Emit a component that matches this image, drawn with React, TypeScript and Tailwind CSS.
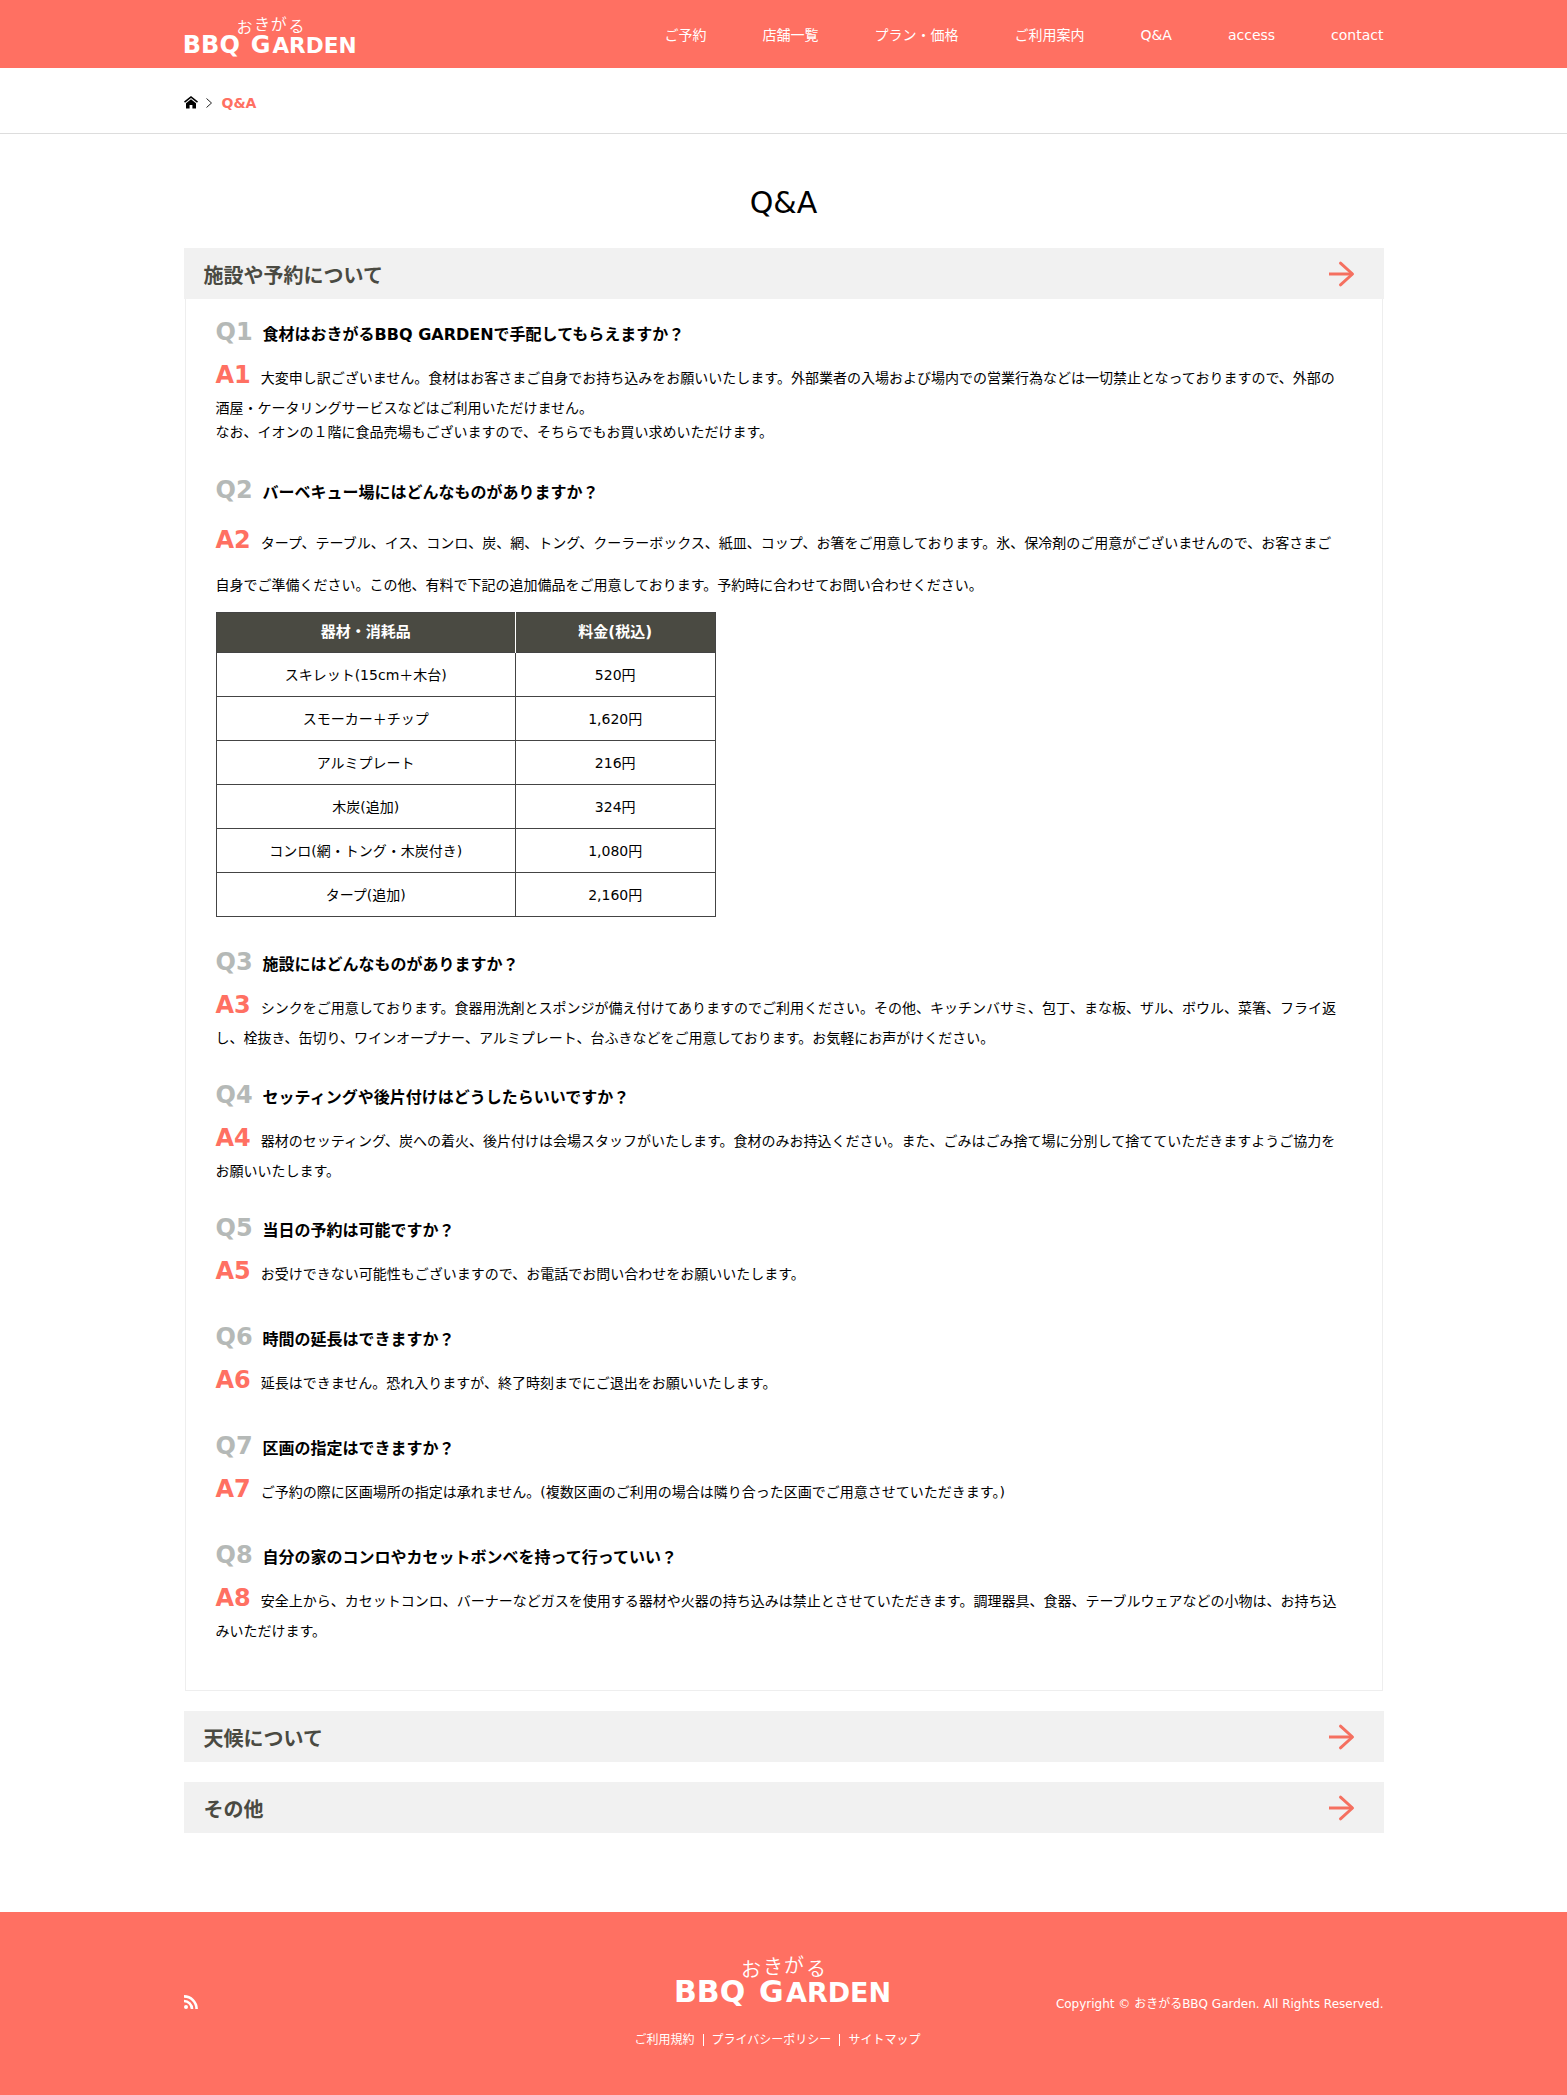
import { useState, type ReactNode } from "react";

const NAV = ["ご予約", "店舗一覧", "プラン・価格", "ご利用案内", "Q&A", "access", "contact"];
const FOOTER_LINKS = ["ご利用規約", "プライバシーポリシー", "サイトマップ"];

const PRICES = [
  ["スキレット(15cm＋木台)", "520円"],
  ["スモーカー＋チップ", "1,620円"],
  ["アルミプレート", "216円"],
  ["木炭(追加)", "324円"],
  ["コンロ(網・トング・木炭付き)", "1,080円"],
  ["タープ(追加)", "2,160円"],
];

function Logo({ className }: { className: string }) {
  return (
    <svg viewBox="-2 -6 220 62" className={className} fill="#fff" role="img" aria-label="おきがる BBQ GARDEN">
      <g fontFamily="'Noto Sans CJK JP', sans-serif" fontSize="20" fontWeight="350">
        <text x="66" y="21">お</text>
        <text x="88" y="18">き</text>
        <text x="109" y="17">が</text>
        <text x="131" y="20">る</text>
      </g>
      <g fontFamily="'DejaVu Sans', sans-serif" fontWeight="700">
        <text x="-1" y="46" fontSize="30">BBQ</text>
        <text x="84" y="46" fontSize="30">G</text>
        <text x="111" y="46" fontSize="27">ARDEN</text>
      </g>
    </svg>
  );
}

function HomeIcon() {
  return (
    <svg viewBox="0 0 14 13" className="h-[13px] w-3.5" fill="currentColor" aria-hidden="true">
      <path d="M7 0 0 5.600 1 6.700 7 1.900l6 4.800 1-1.100z" />
      <path d="M7 3.200 2 7.200V12.500h3.600V9h2.800v3.500H12V7.200z" />
    </svg>
  );
}

function ArrowIcon() {
  return (
    <svg
      viewBox="0 0 26 26"
      className="h-[26px] w-[26px] text-[#f57060]"
      fill="none"
      stroke="currentColor"
      strokeWidth="3"
      aria-hidden="true"
    >
      <path d="M0 13h23.500" />
      <path d="M11.500 2.200 23.500 13 11.500 23.800" strokeLinecap="round" strokeLinejoin="round" />
    </svg>
  );
}

function RssIcon() {
  return (
    <svg viewBox="0 0 14 14" className="size-3.5" fill="none" stroke="#fff" strokeWidth="2.600" aria-hidden="true">
      <circle cx="2" cy="12" r="2" fill="#fff" stroke="none" />
      <path d="M0 6a8 8 0 0 1 8 8M0 1.400A12.600 12.600 0 0 1 12.600 14" />
    </svg>
  );
}

function Question({ n, children }: { n: number; children: ReactNode }) {
  return (
    <h3 className="text-base leading-6 font-bold">
      <span className="mr-2.5 text-2xl leading-[42px] text-[#b5b9b7]">Q{n}</span>
      {children}
    </h3>
  );
}

function Mark({ n }: { n: number }) {
  return <span className="mr-2.5 text-2xl leading-[42px] font-bold text-[#ff7062]">A{n}</span>;
}

function Item({ n, q, children }: { n: number; q: string; children: ReactNode }) {
  return (
    <div className="mb-6">
      <Question n={n}>{q}</Question>
      <p className="mt-px text-sm leading-6">
        <Mark n={n} />
        {children}
      </p>
    </div>
  );
}

function Section({ title, open, onToggle, children }: { title: string; open: boolean; onToggle: () => void; children?: ReactNode }) {
  return (
    <section className="mb-5">
      <h2>
        <button
          type="button"
          aria-expanded={open}
          onClick={onToggle}
          className="flex h-[51px] w-full items-center justify-between bg-[#f1f1f1] pr-[29px] pl-5 text-left text-xl font-bold text-[#4a4a42]"
        >
          <span className="pt-1">{title}</span>
          <ArrowIcon />
        </button>
      </h2>
      {open && children && (
        <div className="mx-px border border-t-0 border-[#eee] pt-3 pr-10 pb-[23px] pl-[30px]">{children}</div>
      )}
    </section>
  );
}

export default function App() {
  const [open, setOpen] = useState<number | null>(0);
  const toggle = (i: number) => setOpen(open === i ? null : i);

  return (
    <div className="min-h-screen bg-white font-['DejaVu_Sans','Noto_Sans_CJK_JP',sans-serif] text-black" lang="ja">
      <header className="bg-[#ff7062] text-white">
        <div className="mx-auto flex h-[68px] max-w-[1200px] items-center justify-between">
          <a href="#top">
            <Logo className="mt-1 -ml-0.5 h-[50px] w-44" />
          </a>
          <nav className="flex gap-14 pt-0.5 text-sm">
            {NAV.map((label) => (
              <a key={label} href={"#" + label}>
                {label}
              </a>
            ))}
          </nav>
        </div>
      </header>

      <nav aria-label="パンくず" className="border-b border-[#ddd]">
        <ol className="mx-auto flex h-[65px] max-w-[1200px] items-center pt-1 text-sm">
          <li>
            <a href="#home" aria-label="ホーム">
              <HomeIcon />
            </a>
          </li>
          <li className="ml-2 flex items-center gap-2.5 font-bold text-[#ff7062]">
            <svg viewBox="0 0 6 10" className="h-2.5 w-1.5" fill="none" stroke="#222" strokeWidth="1" aria-hidden="true">
              <path d="M.5.500 5.500 5 .5 9.500" />
            </svg>
            Q&amp;A
          </li>
        </ol>
      </nav>

      <main className="mx-auto max-w-[1200px] pb-[59px]">
        <h1 className="pt-12 pb-6 text-center text-3xl leading-[42px]">Q&amp;A</h1>

        <Section title="施設や予約について" open={open === 0} onToggle={() => toggle(0)}>
          <Item n={1} q="食材はおきがるBBQ GARDENで手配してもらえますか？">
            大変申し訳ございません。食材はお客さまご自身でお持ち込みをお願いいたします。外部業者の入場および場内での営業行為などは一切禁止となっておりますので、外部の酒屋・ケータリングサービスなどはご利用いただけません。
            <br />
            なお、イオンの１階に食品売場もございますので、そちらでもお買い求めいただけます。
          </Item>

          <div className="mb-6 pt-px">
            <Question n={2}>バーベキュー場にはどんなものがありますか？</Question>
            <p className="mt-2 text-sm leading-[42px]">
              <Mark n={2} />
              タープ、テーブル、イス、コンロ、炭、網、トング、クーラーボックス、紙皿、コップ、お箸をご用意しております。氷、保冷剤のご用意がございませんので、お客さまご自身でご準備ください。この他、有料で下記の追加備品をご用意しております。予約時に合わせてお問い合わせください。
            </p>
            <table className="mt-1.5 w-[500px] table-fixed border-collapse border border-[#444] text-center text-sm">
              <thead>
                <tr className="h-10 bg-[#4a4a42] text-[15px] text-white">
                  <th className="w-3/5 border-r border-white">器材・消耗品</th>
                  <th>料金(税込)</th>
                </tr>
              </thead>
              <tbody>
                {PRICES.map(([name, price]) => (
                  <tr key={name} className="h-11">
                    <td className="border border-[#444]">{name}</td>
                    <td className="border border-[#444]">{price}</td>
                  </tr>
                ))}
              </tbody>
            </table>
          </div>

          <Item n={3} q="施設にはどんなものがありますか？">
            シンクをご用意しております。食器用洗剤とスポンジが備え付けてありますのでご利用ください。その他、キッチンバサミ、包丁、まな板、ザル、ボウル、菜箸、フライ返し、栓抜き、缶切り、ワインオープナー、アルミプレート、台ふきなどをご用意しております。お気軽にお声がけください。
          </Item>
          <Item n={4} q="セッティングや後片付けはどうしたらいいですか？">
            器材のセッティング、炭への着火、後片付けは会場スタッフがいたします。食材のみお持込ください。また、ごみはごみ捨て場に分別して捨てていただきますようご協力をお願いいたします。
          </Item>
          <Item n={5} q="当日の予約は可能ですか？">
            お受けできない可能性もございますので、お電話でお問い合わせをお願いいたします。
          </Item>
          <Item n={6} q="時間の延長はできますか？">
            延長はできません。恐れ入りますが、終了時刻までにご退出をお願いいたします。
          </Item>
          <Item n={7} q="区画の指定はできますか？">
            ご予約の際に区画場所の指定は承れません。(複数区画のご利用の場合は隣り合った区画でご用意させていただきます。)
          </Item>
          <Item n={8} q="自分の家のコンロやカセットボンベを持って行っていい？">
            安全上から、カセットコンロ、バーナーなどガスを使用する器材や火器の持ち込みは禁止とさせていただきます。調理器具、食器、テーブルウェアなどの小物は、お持ち込みいただけます。
          </Item>
        </Section>

        <Section title="天候について" open={open === 1} onToggle={() => toggle(1)} />
        <Section title="その他" open={open === 2} onToggle={() => toggle(2)} />
      </main>

      <footer className="bg-[#ff7062] text-xs text-white">
        <div className="mx-auto grid h-[183px] max-w-[1200px] grid-cols-[1fr_auto_1fr] items-center">
          <a href="#feed" aria-label="RSS" className="w-fit pb-1">
            <RssIcon />
          </a>
          <div className="flex flex-col items-center pb-2.5">
            <Logo className="h-[62px] w-[220px]" />
            <ul className="mt-5 mr-3 flex items-center gap-2">
              {FOOTER_LINKS.map((label, i) => (
                <li key={label} className="flex items-center gap-2">
                  {i > 0 && <span className="h-3 w-px bg-white" />}
                  <a href={"#" + label}>{label}</a>
                </li>
              ))}
            </ul>
          </div>
          <small className="justify-self-end text-xs">Copyright © おきがるBBQ Garden. All Rights Reserved.</small>
        </div>
      </footer>
    </div>
  );
}
